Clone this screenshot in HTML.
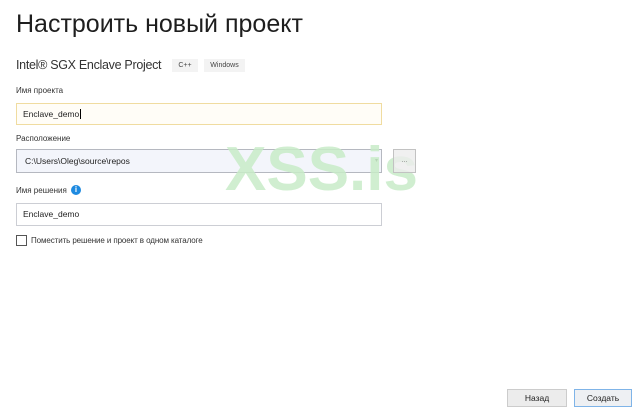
<!DOCTYPE html>
<html><head><meta charset="utf-8"><style>
body{margin:0;width:643px;height:415px;background:#fff;position:relative;overflow:hidden;font-family:"Liberation Sans","DejaVu Sans",sans-serif;color:#1e1e1e}
.a{position:absolute;white-space:nowrap}
.inp{position:absolute;left:16px;width:366px;box-sizing:border-box;border:1px solid #ccced4;font-size:8.5px;line-height:20px;padding-left:6px;background:#fff}
.lbl{font-size:8px;color:#333}
.tag{position:absolute;top:59px;height:13px;background:#f3f3f3;font-size:7px;line-height:13px;text-align:center;color:#444}
.btn{position:absolute;top:389px;height:18px;box-sizing:border-box;border:1px solid #ccc;background:#ececec;font-size:8.5px;line-height:16px;text-align:center}
</style></head><body>
<div class="a" style="left:16px;top:10px;font-size:25px;color:#1e1e1e">Настроить новый проект</div>
<div class="a" style="left:16px;top:58px;font-size:12.5px;color:#333;letter-spacing:-0.3px">Intel® SGX Enclave Project</div>
<div class="tag" style="left:172px;width:26px">C++</div>
<div class="tag" style="left:204px;width:41px">Windows</div>
<div class="a lbl" style="left:16px;top:86px">Имя проекта</div>
<div class="inp" style="top:103px;height:22px;border-color:#f0dca0;background:#fffdf7">Enclave_demo<span style="border-left:1px solid #000;margin-left:1px"></span></div>
<div class="a lbl" style="left:16px;top:134px">Расположение</div>
<div class="inp" style="top:149px;height:24px;line-height:22px;background:#f3f5fb;border-color:#b5b8c0;padding-left:8px">C:\Users\Oleg\source\repos<span style="position:absolute;right:3px;top:0;font-size:6px;color:#555">▾</span></div>
<div class="a lbl" style="left:16px;top:186px">Имя решения</div>
<div class="a" style="left:71px;top:185px;width:10px;height:10px;border-radius:50%;background:#1e8ae0;color:#fff;font-size:8px;font-weight:bold;line-height:10px;text-align:center">i</div>
<div class="inp" style="top:203px;height:23px;line-height:21px">Enclave_demo</div>
<div class="a" style="left:16px;top:235px;width:11px;height:11px;box-sizing:border-box;border:1px solid #555;background:#fff"></div>
<div class="a lbl" style="left:31px;top:236px;font-size:8px;letter-spacing:-0.1px">Поместить решение и проект в одном каталоге</div>
<div class="a" style="left:225px;top:134px;font-size:62px;font-weight:bold;color:#c8ecc8;opacity:0.85">XSS.is</div>
<div class="a" style="left:393px;top:149px;width:23px;height:24px;box-sizing:border-box;border:1px solid #c2c2c2;background:rgba(236,236,236,0.8);font-size:7px;text-align:center;line-height:22px;color:#777">...</div>
<div class="btn" style="left:507px;width:60px">Назад</div>
<div class="btn" style="left:574px;width:58px;border-color:#7fb4e8;background:#eef0f3">Создать</div>
</body></html>
